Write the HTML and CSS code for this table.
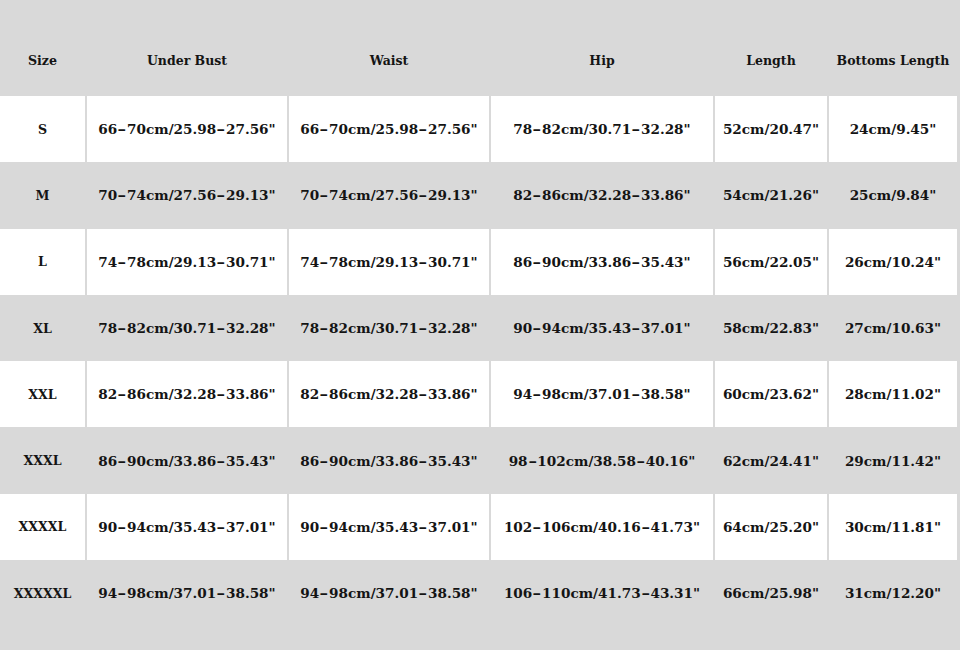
FILE: index.html
```html
<!DOCTYPE html>
<html>
<head>
<meta charset="utf-8">
<link rel="stylesheet" href="styles.css">
</head>
<body>
<table class="chart">
  <colgroup>
    <col class="c1"><col class="c2"><col class="c3"><col class="c4"><col class="c5"><col class="c6">
  </colgroup>
  <thead>
    <tr class="head"><th>Size</th><th>Under Bust</th><th>Waist</th><th>Hip</th><th>Length</th><th>Bottoms Length</th></tr>
  </thead>
  <tbody>
    <tr class="light"><td>S</td><td>66<span class="d">-</span>70cm/25.98<span class="d">-</span>27.56"</td><td>66<span class="d">-</span>70cm/25.98<span class="d">-</span>27.56"</td><td>78<span class="d">-</span>82cm/30.71<span class="d">-</span>32.28"</td><td>52cm/20.47"</td><td>24cm/9.45"</td></tr>
    <tr class="dark"><td>M</td><td>70<span class="d">-</span>74cm/27.56<span class="d">-</span>29.13"</td><td>70<span class="d">-</span>74cm/27.56<span class="d">-</span>29.13"</td><td>82<span class="d">-</span>86cm/32.28<span class="d">-</span>33.86"</td><td>54cm/21.26"</td><td>25cm/9.84"</td></tr>
    <tr class="light"><td>L</td><td>74<span class="d">-</span>78cm/29.13<span class="d">-</span>30.71"</td><td>74<span class="d">-</span>78cm/29.13<span class="d">-</span>30.71"</td><td>86<span class="d">-</span>90cm/33.86<span class="d">-</span>35.43"</td><td>56cm/22.05"</td><td>26cm/10.24"</td></tr>
    <tr class="dark"><td>XL</td><td>78<span class="d">-</span>82cm/30.71<span class="d">-</span>32.28"</td><td>78<span class="d">-</span>82cm/30.71<span class="d">-</span>32.28"</td><td>90<span class="d">-</span>94cm/35.43<span class="d">-</span>37.01"</td><td>58cm/22.83"</td><td>27cm/10.63"</td></tr>
    <tr class="light"><td>XXL</td><td>82<span class="d">-</span>86cm/32.28<span class="d">-</span>33.86"</td><td>82<span class="d">-</span>86cm/32.28<span class="d">-</span>33.86"</td><td>94<span class="d">-</span>98cm/37.01<span class="d">-</span>38.58"</td><td>60cm/23.62"</td><td>28cm/11.02"</td></tr>
    <tr class="dark"><td>XXXL</td><td>86<span class="d">-</span>90cm/33.86<span class="d">-</span>35.43"</td><td>86<span class="d">-</span>90cm/33.86<span class="d">-</span>35.43"</td><td>98<span class="d">-</span>102cm/38.58<span class="d">-</span>40.16"</td><td>62cm/24.41"</td><td>29cm/11.42"</td></tr>
    <tr class="light"><td>XXXXL</td><td>90<span class="d">-</span>94cm/35.43<span class="d">-</span>37.01"</td><td>90<span class="d">-</span>94cm/35.43<span class="d">-</span>37.01"</td><td>102<span class="d">-</span>106cm/40.16<span class="d">-</span>41.73"</td><td>64cm/25.20"</td><td>30cm/11.81"</td></tr>
    <tr class="dark"><td>XXXXXL</td><td>94<span class="d">-</span>98cm/37.01<span class="d">-</span>38.58"</td><td>94<span class="d">-</span>98cm/37.01<span class="d">-</span>38.58"</td><td>106<span class="d">-</span>110cm/41.73<span class="d">-</span>43.31"</td><td>66cm/25.98"</td><td>31cm/12.20"</td></tr>
  </tbody>
</table>
</body>
</html>
```

FILE: styles.css
```css
html, body {
  margin: 0;
  padding: 0;
  background: #d9d9d9;
}
body {
  width: 960px;
  height: 650px;
  overflow: hidden;
}
.chart {
  width: 957px;
  border-collapse: collapse;
  table-layout: fixed;
  font-family: "DejaVu Serif", "Liberation Serif", serif;
  font-weight: bold;
  font-size: 13.6px;
  color: #141414;
}
.c1 { width: 86px; }
.c2 { width: 202px; }
.c3 { width: 202px; }
.c4 { width: 224px; }
.c5 { width: 114px; }
.c6 { width: 129px; }
.chart th, .chart td {
  padding: 0;
  text-align: center;
  vertical-align: middle;
  white-space: nowrap;
  border-left: 2px solid #d9d9d9;
}
.chart th:first-child, .chart td:first-child {
  border-left: none;
  font-size: 12.6px;
}
.d {
  display: inline-block;
  width: 9.8px;
  text-align: center;
  transform: scaleX(1.6);
}
.head th {
  height: 72px;
  padding-top: 24px;
  font-weight: bold;
  font-size: 12.5px;
}
.chart td {
  height: 66.3px;
}
.light td { background: #ffffff; }
.dark td { background: #d9d9d9; }
```
